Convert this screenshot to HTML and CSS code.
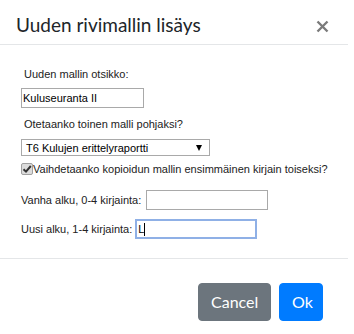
FILE: index.html
```html
<!DOCTYPE html>
<html lang="fi">
<head>
<meta charset="utf-8">
<title>Uuden rivimallin lisäys</title>
<link rel="stylesheet" href="styles.css">
</head>
<body>
<div class="modal">
  <div class="modal-header">
    <h5 class="modal-title">Uuden rivimallin lisäys</h5>
    <button class="close" type="button" aria-label="Close">
      <svg width="13" height="13" viewBox="0 0 13 13"><path d="M1.5 1.5 L11.5 11.5 M11.5 1.5 L1.5 11.5" stroke="#7b7b7b" stroke-width="2.4" fill="none"/></svg>
    </button>
  </div>
  <div class="modal-body">
    <p class="lbl">Uuden mallin otsikko:</p>
    <div class="field title-field">Kuluseuranta II</div>
    <p class="lbl lbl2">Otetaanko toinen malli pohjaksi?</p>
    <div class="select"><span>T6 Kulujen erittelyraportti</span><span class="arrow"></span></div>
    <div class="check">
      <svg class="cb" width="12" height="12" viewBox="0 0 12 12"><rect x="0.5" y="0.5" width="11" height="11" rx="1.5" fill="#dcdcdc" stroke="#a0a0a0"/><path d="M2.5 6.2 L5 8.6 L9.8 3" stroke="#333" stroke-width="2" fill="none"/></svg>
      <span>Vaihdetaanko kopioidun mallin ensimmäinen kirjain toiseksi?</span>
    </div>
    <div class="row row-old"><span>Vanha alku, 0-4 kirjainta:</span><div class="field"></div></div>
    <div class="row row-new"><span>Uusi alku, 1-4 kirjainta:</span><div class="field focused">L<span class="caret"></span></div></div>
  </div>
  <div class="modal-footer">
    <button class="btn btn-secondary" type="button">Cancel</button>
    <button class="btn btn-primary" type="button">Ok</button>
  </div>
</div>
</body>
</html>
```
FILE: styles.css
```css
html, body {
  margin: 0;
  padding: 0;
  background: #fff;
}
.modal {
  width: 348px;
  height: 334px;
  background: #fff;
  color: #212529;
}
.modal-header {
  display: flex;
  align-items: flex-start;
  height: 44px;
  border-bottom: 1px solid #e4e6e8;
  box-sizing: content-box;
  padding: 0 19px 0 16px;
}
.modal-title {
  margin: 0;
  padding-top: 13px;
  font-family: Lato, "Noto Sans", sans-serif;
  font-weight: 400;
  font-size: 19px;
  line-height: 24px;
  color: #212529;
  flex: 1;
}
.close {
  margin-top: 20px;
  padding: 0;
  border: 0;
  background: transparent;
  width: 13px;
  height: 13px;
  display: flex;
}
.modal-body {
  padding: 22px 0 0 21px;
  height: 213px;
  box-sizing: border-box;
  font-family: "Liberation Sans", Arial, sans-serif;
  font-size: 11px;
  line-height: 14px;
  color: #222;
}
.lbl {
  margin: 0 0 7px 3px;
}
.lbl2 {
  margin-top: 9px;
  margin-bottom: 8px;
}
.field {
  box-sizing: border-box;
  width: 122px;
  height: 20px;
  border: 1px solid #a9a9a9;
  padding: 2px 1px;
  color: #000;
  line-height: 14px;
  background: #fff;
}
.title-field {
  width: 123px;
}
.select {
  box-sizing: border-box;
  width: 189px;
  height: 17px;
  border: 1px solid #a9a9a9;
  display: flex;
  align-items: center;
  justify-content: space-between;
  padding: 0 7px 0 4px;
  color: #000;
}
.arrow {
  width: 0;
  height: 0;
  border-left: 3.5px solid transparent;
  border-right: 3.5px solid transparent;
  border-top: 6px solid #000;
}
.check {
  display: flex;
  align-items: center;
  margin-top: 6px;
  height: 14px;
}
.cb {
  margin-right: 0;
  flex: none;
}
.row {
  display: flex;
  align-items: center;
  gap: 5px;
}
.row-old {
  margin-top: 14px;
}
.row-new {
  margin-top: 9px;
  gap: 3px;
}
.focused {
  border: 2px solid #8fb0e6;
  padding: 1px 1px;
  display: flex;
  align-items: center;
}
.caret {
  display: inline-block;
  width: 1px;
  height: 13px;
  background: #000;
  margin-left: 0;
}
.modal-footer {
  border-top: 1px solid #e4e6e8;
  display: flex;
  justify-content: flex-end;
  gap: 8px;
  padding: 24px 25px 0 0;
}
.btn {
  font-family: Lato, "Noto Sans", sans-serif;
  font-size: 16px;
  line-height: 24px;
  height: 38px;
  padding: 6px 12px;
  border: 1px solid transparent;
  border-radius: 4px;
  color: #fff;
}
.btn-secondary {
  background: #6c757d;
  border-color: #6c757d;
  width: 73px;
}
.btn-primary {
  background: #007bff;
  border-color: #007bff;
  width: 44px;
}
```
